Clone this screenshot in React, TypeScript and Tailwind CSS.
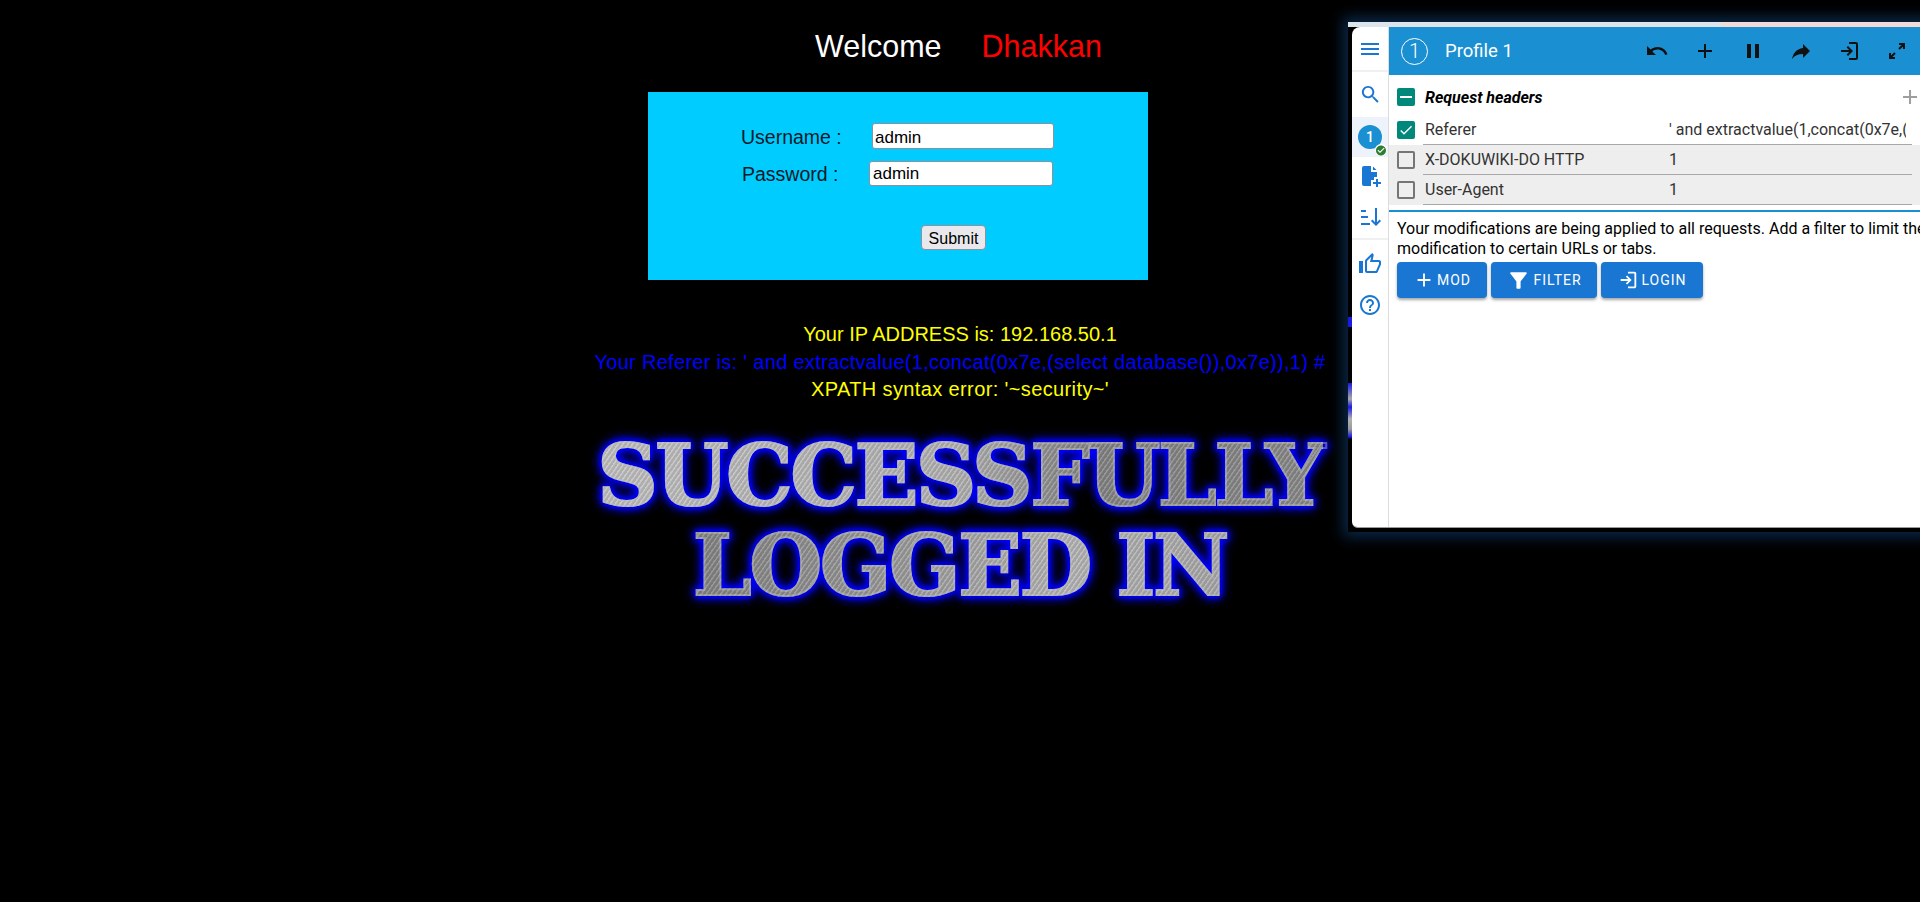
const paths = {
  undo: "M12.5 8c-2.65 0-5.05.99-6.9 2.6L2 7v9h9l-3.62-3.62c1.39-1.16 3.16-1.88 5.12-1.88 3.54 0 6.55 2.31 7.6 5.5l2.37-.78C21.08 11.03 17.15 8 12.5 8z",
  add: "M19 13h-6v6h-2v-6H5v-2h6V5h2v6h6v2z",
  pause: "M6 19h4V5H6v14zm8-14v14h4V5h-4z",
  forward: "M14 9V5l7 7-7 7v-4.1c-5 0-8.5 1.6-11 5.1 1-5 4-10 11-11z",
  login: "M11 7 9.6 8.4l2.6 2.6H4v2h8.2l-2.6 2.6L11 17l5-5-5-5zm8 12h-7v2h7c1.1 0 2-.9 2-2V5c0-1.1-.9-2-2-2h-7v2h7v14z",
  expand: "M14 4h6v6h-2V7.4l-3.3 3.3-1.4-1.4L16.6 6H14zM4 14h2v2.6l3.3-3.3 1.4 1.4L7.4 18H10v2H4z",
  menu: "M3 18h18v-2H3v2zm0-5h18v-2H3v2zm0-7v2h18V6H3z",
  search: "M15.5 14h-.79l-.28-.27C15.41 12.59 16 11.11 16 9.5 16 5.91 13.09 3 9.5 3S3 5.91 3 9.5 5.91 16 9.5 16c1.61 0 3.09-.59 4.23-1.57l.27.28v.79l5 4.99L20.49 19l-4.99-5zm-6 0C7.01 14 5 11.99 5 9.5S7.01 5 9.5 5 14 7.01 14 9.5 11.99 14 9.5 14z",
  fileAdd: "M6 2h7v6h6v5h-3v3h-3v6H6a2 2 0 0 1-2-2V4a2 2 0 0 1 2-2zM15 2.5 18.5 6H15zM18 15h2v3h3v2h-3v3h-2v-3h-3v-2h3z",
  sort: "M3 5h5v2H3zM3 11h7v2H3zM3 18h9v2H3zM17 3h2v14.2l2.6-2.6L23 16l-5 5-5-5 1.4-1.4 2.6 2.6z",
  thumb: "M9 21h9c.83 0 1.54-.5 1.84-1.22l3.02-7.05c.09-.23.14-.47.14-.73v-2c0-1.1-.9-2-2-2h-6.31l.95-4.57.03-.32c0-.41-.17-.79-.44-1.06L14.17 1 7.58 7.59C7.22 7.95 7 8.45 7 9v10c0 1.1.9 2 2 2zM9 9l4.34-4.34L12 10h9v2l-3 7H9V9zM1 9h4v12H1z",
  help: "M11 18h2v-2h-2v2zm1-16C6.48 2 2 6.48 2 12s4.48 10 10 10 10-4.48 10-10S17.52 2 12 2zm0 18c-4.41 0-8-3.59-8-8s3.59-8 8-8 8 3.59 8 8-3.59 8-8 8zm0-14c-2.21 0-4 1.79-4 4h2c0-1.1.9-2 2-2s2 .9 2 2c0 2-3 1.75-3 5h2c0-2.25 3-2.5 3-5 0-2.21-1.79-4-4-4z",
  filter: "M4.25 5.61C6.27 8.2 10 13 10 13v6c0 .55.45 1 1 1h2c.55 0 1-.45 1-1v-6s3.72-4.8 5.74-7.39c.51-.66.04-1.61-.79-1.61H5.04c-.83 0-1.3.95-.79 1.61z",
  checkCircle: "M12 2C6.48 2 2 6.48 2 12s4.48 10 10 10 10-4.48 10-10S17.52 2 12 2zm-2 15l-5-5 1.41-1.41L10 14.17l7.59-7.59L19 8l-9 9z",
  check: "M9 16.17 4.83 12l-1.42 1.41L9 19 21 7l-1.41-1.41z",
};

function Icon({ d, className }: { d: string; className?: string }) {
  return (
    <svg viewBox="0 0 24 24" className={className} fill="currentColor">
      <path d={d} />
    </svg>
  );
}

function HeaderRow({ label, value, checked, shaded }: { label: string; value: string; checked?: boolean; shaded?: boolean }) {
  return (
    <div className={`flex items-center h-[30px] shrink-0 pl-2 ${shaded ? "bg-[#eeeeee]" : ""}`}>
      <div className={`w-[18px] h-[18px] shrink-0 rounded-[2px] flex items-center justify-center ${checked ? "bg-[#00897b] text-white" : "border-2 border-[#757575]"}`}>
        {checked && <Icon d={paths.check} className="w-4 h-4" />}
      </div>
      <div className="ml-2 w-[489px] shrink-0 h-full flex items-center pl-[2px] pt-[1px] border-b border-[#a8a8a8]">
        <span className="w-[244px] shrink-0 text-[16px] text-[#333333] whitespace-nowrap">{label}</span>
        <span className="w-[237px] overflow-hidden whitespace-nowrap text-[16px] text-[#333333]">{value}</span>
      </div>
    </div>
  );
}

function ActionButton({ d, label, width, iconSize }: { d: string; label: string; width: string; iconSize: string }) {
  return (
    <div className={`h-9 ${width} rounded-[4px] bg-[#1976d2] text-white flex items-center justify-center gap-[2px] shadow-[0_2px_3px_rgba(0,0,0,0.35)]`}>
      <Icon d={d} className={iconSize} />
      <span className="text-[14px] tracking-[1px]">{label}</span>
    </div>
  );
}

function ModHeader() {
  return (
    <div className="absolute left-[1348px] top-[22px] w-[640px] h-[510px] flex flex-col bg-black shadow-[0_0_13px_5px_rgba(25,100,180,0.4)] font-['Roboto',sans-serif]">
      <div className="h-[5px] shrink-0 bg-[linear-gradient(90deg,#dde5ec_0,#dde5ec_373px,#f0dcd4_373px)]" />
      <div className="flex flex-1 min-h-0">
        <div className="w-[4px] shrink-0 bg-[linear-gradient(180deg,#000_0,#000_290px,#1a1ae0_290px,#1a1ae0_300px,#000_300px,#000_356px,#1a1ae0_356px,#a8a8a8_372px,#1a1ae0_380px,#b0b0b0_392px,#999_402px,#1a1ae0_410px,#000_412px)]" />
        <div className="flex flex-1 min-w-0 bg-white rounded-tl-[8px] rounded-bl-[6px] border-b border-[#9a9a9a] overflow-hidden mb-[4px]">
          {/* left rail */}
          <div className="w-[37px] shrink-0 flex flex-col items-center border-r border-[#dddddd] text-[#1976d2]">
            <div className="w-full h-[45px] shrink-0 flex items-center justify-center border-b-2 border-[#f0f0f0]">
              <Icon d={paths.menu} className="w-6 h-6" />
            </div>
            <div className="h-[45px] shrink-0 flex items-center justify-center">
              <Icon d={paths.search} className="w-[23px] h-[23px]" />
            </div>
            <div className="relative w-full h-[40px] shrink-0 bg-[#eef3fb] flex items-center justify-center">
              <div className="w-[24px] h-[24px] rounded-full bg-[#1a8fd1] text-white text-[14px] font-medium flex items-center justify-center">1</div>
              <div className="absolute left-[23px] top-[27px] w-[12px] h-[12px] rounded-full bg-white flex items-center justify-center">
                <Icon d={paths.checkCircle} className="w-[13px] h-[13px] text-[#2e7d32]" />
              </div>
            </div>
            <div className="h-[38px] shrink-0 flex items-center justify-center">
              <Icon d={paths.fileAdd} className="w-6 h-6" />
            </div>
            <div className="w-full h-[45px] shrink-0 flex items-center justify-center border-b-2 border-[#f0f0f0]">
              <Icon d={paths.sort} className="w-6 h-6" />
            </div>
            <div className="h-[47px] shrink-0 flex items-center justify-center">
              <Icon d={paths.thumb} className="w-6 h-6" />
            </div>
            <div className="h-[36px] shrink-0 flex items-center justify-center">
              <Icon d={paths.help} className="w-6 h-6" />
            </div>
          </div>

          {/* main */}
          <div className="flex-1 min-w-0 flex flex-col">
            <div className="h-[48px] shrink-0 bg-[#1a8fd1] flex items-center">
              <div className="ml-[12px] w-[27px] h-[27px] shrink-0 rounded-full border-[1.5px] border-white text-white flex items-center justify-center text-[20px] font-light">1</div>
              <span className="ml-[17px] mt-[2px] w-[67px] shrink-0 whitespace-nowrap text-[18.5px] text-white">Profile 1</span>
              <div className="ml-[133px] flex items-center text-[#111111]">
                <Icon d={paths.undo} className="w-6 h-6" />
                <Icon d={paths.add} className="w-6 h-6 ml-6" />
                <Icon d={paths.pause} className="w-6 h-6 ml-6" />
                <Icon d={paths.forward} className="w-6 h-6 ml-6" />
                <Icon d={paths.login} className="w-6 h-6 ml-6" />
                <Icon d={paths.expand} className="w-6 h-6 ml-6" />
              </div>
            </div>
            <div className="flex items-center justify-between w-[533px] h-[40px] pt-[4px] pl-2 shrink-0">
              <div className="flex items-center">
                <div className="w-[18px] h-[18px] rounded-[2px] bg-[#00897b] flex items-center justify-center">
                  <div className="w-3 h-[2px] bg-white" />
                </div>
                <span className="ml-[10px] mt-[1px] text-[16px] font-bold italic text-black">Request headers</span>
              </div>
              <Icon d={paths.add} className="w-6 h-6 text-[#9e9e9e]" />
            </div>
            <HeaderRow label="Referer" value="' and extractvalue(1,concat(0x7e,(select database()),0x7e)),1) #" checked />
            <HeaderRow label="X-DOKUWIKI-DO HTTP" value="1" shaded />
            <HeaderRow label="User-Agent" value="1" shaded />
            <div className="mt-[5px] h-[2px] bg-[#1a8fd1] shrink-0" />
            <p className="ml-2 mt-[7px] w-[545px] text-[16px] leading-[19.5px] text-black">
              Your modifications are being applied to all requests. Add a filter to limit the modification to certain URLs or tabs.
            </p>
            <div className="ml-2 mt-[4px] flex gap-1">
              <ActionButton d={paths.add} label="MOD" width="w-[90px]" iconSize="w-[22px] h-[22px]" />
              <ActionButton d={paths.filter} label="FILTER" width="w-[106px]" iconSize="w-[25px] h-[25px]" />
              <ActionButton d={paths.login} label="LOGIN" width="w-[102px]" iconSize="w-[22px] h-[22px]" />
            </div>
          </div>
        </div>
      </div>
    </div>
  );
}

export default function App() {
  return (
    <div className="relative h-[902px] overflow-hidden bg-black font-['Liberation_Sans',Arial,sans-serif]">
      <div className="pt-[27px] pl-[815px] h-[92px] text-[30.5px] leading-[38px] whitespace-nowrap">
        <span className="text-white">Welcome</span>
        <span className="ml-[40px] text-[#ff0000]">Dhakkan</span>
      </div>

      <div className="ml-[648px] w-[500px] h-[188px] bg-[#00ccff] pt-[31px] text-[19.5px] leading-[26px] text-[#0a1a2a]">
        <div className="flex items-center h-[26px]">
          <span className="w-[224px] pl-[93px] pt-[2px]">Username :</span>
          <input readOnly value="admin" className="w-[182px] h-[26px] rounded-[3px] border border-[#8f8f9d] bg-white px-[2px] pt-[3px] text-[17px] text-black" />
        </div>
        <div className="flex items-center h-[25px] mt-[12px]">
          <span className="w-[221px] pl-[94px]">Password :</span>
          <input readOnly value="admin" className="w-[184px] h-[25px] rounded-[3px] border border-[#8f8f9d] bg-white px-[3px] pt-[1px] text-[17px] text-black" />
        </div>
        <button className="block ml-[273px] mt-[39px] w-[65px] h-[25px] rounded-[4px] border border-[#8f8f9d] bg-[#e9e9ed] text-[16px] text-black">Submit</button>
      </div>

      <div className="mt-[41px] text-center text-[20px] leading-[27.5px]">
        <div className="text-[#ffff00]">Your IP ADDRESS is: 192.168.50.1</div>
        <div className="text-[#0000ff] tracking-[0.3px]">Your Referer is: ' and extractvalue(1,concat(0x7e,(select database()),0x7e)),1) #</div>
        <div className="text-[#ffff00] tracking-[0.38px]">XPATH syntax error: '~security~'</div>
      </div>

      <div className="mt-[27px] flex flex-col items-center font-['DejaVu_Serif',serif] font-bold text-[84px] leading-[90px] tracking-[-2.6px]">
        <div className="bg-[repeating-linear-gradient(125deg,rgba(255,255,255,0.14)_0px,rgba(255,255,255,0.14)_1px,rgba(0,0,0,0.1)_2px,rgba(0,0,0,0.1)_4px),linear-gradient(90deg,#c4c4c4_0%,#b4b4b4_50%,#858585_68%,#8c8c8c_100%)] bg-clip-text text-transparent [-webkit-text-stroke:2px_rgba(190,190,190,0.45)] [filter:drop-shadow(0_0_2px_#0000ff)_drop-shadow(0_0_3px_#0000ff)_drop-shadow(0_0_5px_#0000ff)]">SUCCESSFULLY</div>
        <div className="bg-[repeating-linear-gradient(125deg,rgba(255,255,255,0.14)_0px,rgba(255,255,255,0.14)_1px,rgba(0,0,0,0.1)_2px,rgba(0,0,0,0.1)_4px),linear-gradient(90deg,#858585_0%,#9a9a9a_35%,#b8b8b8_70%,#aaaaaa_100%)] bg-clip-text text-transparent [-webkit-text-stroke:2px_rgba(190,190,190,0.45)] [filter:drop-shadow(0_0_2px_#0000ff)_drop-shadow(0_0_3px_#0000ff)_drop-shadow(0_0_5px_#0000ff)]">LOGGED IN</div>
      </div>

      <ModHeader />
    </div>
  );
}
